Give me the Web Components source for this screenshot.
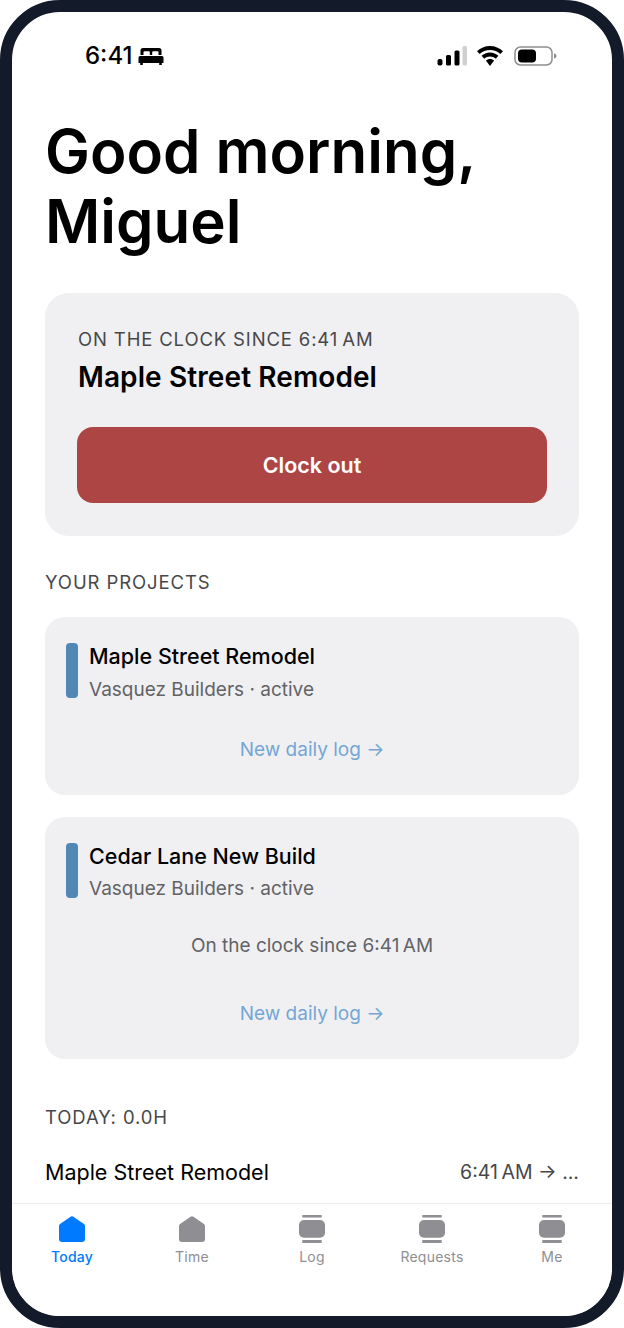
<!doctype html>
<html>
<head>
<meta charset="utf-8">
<style>
  html, body { margin: 0; padding: 0; background: #fff; }
  body { font-family: Inter, "Liberation Sans", sans-serif; }
</style>
</head>
<body>
<phone-frame>
  <status-bar slot="status"></status-bar>
  <h-greeting>Good morning,<br>Miguel</h-greeting>
  <clock-card label="On the clock since 6:41&#8239;AM" project="Maple Street Remodel" action="Clock out"></clock-card>
  <section-label style="margin-top:34px">Your projects</section-label>
  <project-card style="margin-top:23px" name="Maple Street Remodel" meta="Vasquez Builders · active"></project-card>
  <project-card style="margin-top:22px" name="Cedar Lane New Build" meta="Vasquez Builders · active" note="On the clock since 6:41&#8239;AM"></project-card>
  <section-label style="margin-top:46px">Today: 0.0h</section-label>
  <entry-row name="Maple Street Remodel" time="6:41&#8239;AM → ..."></entry-row>
  <tab-bar slot="tabs">
    <tab-item label="Today" icon="home" active></tab-item>
    <tab-item label="Time" icon="home"></tab-item>
    <tab-item label="Log" icon="stack"></tab-item>
    <tab-item label="Requests" icon="stack"></tab-item>
    <tab-item label="Me" icon="stack"></tab-item>
  </tab-bar>
</phone-frame>

<script>
// Small helper so each component only declares its css and markup
class ShadowEl extends HTMLElement {
  constructor() {
    super();
    this.attachShadow({ mode: 'open' });
  }
  connectedCallback() {
    this.shadowRoot.innerHTML = `<style>${this.css()}</style>${this.html()}`;
  }
  attr(name) {
    return this.getAttribute(name) || '';
  }
}

class PhoneFrame extends ShadowEl {
  css() {
    return `
      :host { display: block; width: 624px; height: 1328px; box-sizing: border-box;
        border: 12px solid #131a2a; border-radius: 60px; background: #fff; overflow: hidden; }
      .screen { height: 100%; display: flex; flex-direction: column; }
      .scroll { flex: 1; min-height: 0; overflow: hidden; padding: 0 33px; }
    `;
  }
  html() {
    return `<div class="screen">
      <slot name="status"></slot>
      <div class="scroll"><slot></slot></div>
      <slot name="tabs"></slot>
    </div>`;
  }
}

class StatusBar extends ShadowEl {
  css() {
    return `
      :host { display: flex; align-items: center; justify-content: space-between; height: 88px;
        box-sizing: border-box; padding: 0 55px 0 73px; flex: none; }
      .left, .right { display: flex; align-items: center; }
      .time { font-size: 24px; font-weight: 500; color: #000; line-height: 28px; }
      svg { display: block; }
    `;
  }
  html() {
    return `<div class="left">
        <span class="time">6:41</span>
        <svg style="margin-left:6px" width="26" height="19" viewBox="0 0 26 19">
          <path fill-rule="evenodd" d="M5 1h16a2.500 2.500 0 0 1 2.500 2.500V8h-21V3.500A2.500 2.500 0 0 1 5 1zM6.500 4.200a1 1 0 0 0-1 1V8h6.300V5.200a1 1 0 0 0-1-1zM15.200 4.200a1 1 0 0 0-1 1V8h6.300V5.200a1 1 0 0 0-1-1z" fill="#000"/>
          <path d="M2 9h22a1.500 1.500 0 0 1 1.500 1.500V16h-1.700v2h-2.600v-2H4.800v2H2.200v-2H.5v-5.500A1.500 1.500 0 0 1 2 9z" fill="#000"/>
        </svg>
      </div>
      <div class="right">
        <svg width="30" height="20" viewBox="0 0 30 20">
          <rect x="0.500" y="13" width="5" height="6.500" rx="2" fill="#000"/>
          <rect x="9" y="9" width="5" height="10.500" rx="1.500" fill="#000"/>
          <rect x="17.500" y="4.500" width="5" height="15" rx="1.500" fill="#000"/>
          <rect x="25.500" y="0" width="4.500" height="19.500" rx="1.500" fill="#cfcfcf"/>
        </svg>
        <svg style="margin-left:10px" width="26" height="20" viewBox="0 0 26 20">
          <path d="M13 0C8 0 3.500 2 0 5.200l2.700 2.900C5.500 5.500 9 4 13 4s7.500 1.500 10.300 4.100L26 5.200C22.500 2 18 0 13 0z" fill="#000"/>
          <path d="M13 6.500c-3.300 0-6.200 1.300-8.400 3.300l2.700 2.900C8.800 11.300 10.800 10.500 13 10.500s4.200.8 5.700 2.200l2.700-2.900C19.200 7.800 16.300 6.500 13 6.500z" fill="#000"/>
          <path d="M13 13c-1.600 0-3 .6-4.100 1.600L13 20l4.100-5.400C16 13.600 14.600 13 13 13z" fill="#000"/>
        </svg>
        <svg style="margin-left:11px" width="43" height="20" viewBox="0 0 43 20">
          <rect x="1" y="1" width="37" height="18" rx="5.500" fill="none" stroke="#8e8e8e" stroke-width="1.500"/>
          <rect x="4" y="3.500" width="18" height="13" rx="4" fill="#000"/>
          <path d="M40 7.500c1.500.3 2.500 1.200 2.500 2.500s-1 2.200-2.500 2.500z" fill="#8e8e8e"/>
        </svg>
      </div>`;
  }
}

class HGreeting extends ShadowEl {
  css() {
    return `
      :host { display: block; font-size: 60px; line-height: 70px; font-weight: 600; color: #000;
        margin-top: 16px; }
    `;
  }
  html() {
    return `<slot></slot>`;
  }
}

class ClockCard extends ShadowEl {
  css() {
    return `
      :host { display: block; background: #f0f0f3; border-radius: 24px; padding: 32px 33px; margin-top: 37px;
        box-sizing: border-box; height: 243px; }
      .label { font-size: 18.500px; line-height: 28px; letter-spacing: .85px; color: #48484a; text-transform: uppercase; }
      .name { font-size: 28px; line-height: 34px; font-weight: 600; letter-spacing: .1px; color: #000; margin-top: 7px; }
      button { display: block; width: calc(100% + 2px); margin: 33px -1px 0; height: 76px; border: 0; border-radius: 16px;
        background: #ae4545; color: #fff; font: 600 21.500px Inter, sans-serif; }
    `;
  }
  html() {
    return `<div class="label">${this.attr('label')}</div>
      <div class="name">${this.attr('project')}</div>
      <button>${this.attr('action')}</button>`;
  }
}

class SectionLabel extends ShadowEl {
  css() {
    return `
      :host { display: block; font-size: 18.500px; line-height: 24px; letter-spacing: .9px; color: #48484a;
        text-transform: uppercase; }
    `;
  }
  html() {
    return `<slot></slot>`;
  }
}

class ProjectCard extends ShadowEl {
  css() {
    return `
      :host { display: block; background: #f0f0f3; border-radius: 20px; padding: 26px 21px 33px; }
      .head { display: flex; gap: 11px; }
      .bar { width: 12px; height: 55px; border-radius: 4px; background: #5087b5; flex: none; }
      .name { font-size: 21.500px; line-height: 28px; font-weight: 500; color: #000; margin-top: -1px; }
      .meta { font-size: 19px; line-height: 24px; color: #636366; margin-top: 7.500px; }
      :host([note]) .meta { margin-top: 7px; }
      .note { font-size: 19px; line-height: 24px; color: #636366; text-align: center; margin-top: 32.500px; }
      .link { font-size: 19px; line-height: 24px; color: #74a6d4; text-align: center; margin-top: 36.500px; }
      .note + .link { margin-top: 44px; }
    `;
  }
  html() {
    const note = this.attr('note');
    return `<div class="head"><div class="bar"></div><div>
        <div class="name">${this.attr('name')}</div>
        <div class="meta">${this.attr('meta')}</div>
      </div></div>
      ${note ? `<div class="note">${note}</div>` : ''}
      <div class="link">New daily log →</div>`;
  }
}

class EntryRow extends ShadowEl {
  css() {
    return `
      :host { display: flex; justify-content: space-between; align-items: center; margin-top: 29px; line-height: 28px; }
      .name { font-size: 21.500px; color: #000; }
      .time { font-size: 19.500px; color: #48484a; }
    `;
  }
  html() {
    return `<span class="name">${this.attr('name')}</span><span class="time">${this.attr('time')}</span>`;
  }
}

class TabBar extends ShadowEl {
  css() {
    return `
      :host { display: grid; grid-template-columns: repeat(5, 1fr); flex: none; height: 113px; box-sizing: border-box;
        border-top: 1px solid #ececee; background: #fff; }
    `;
  }
  html() {
    return `<slot></slot>`;
  }
}

const TAB_ICONS = {
  home: `<path d="M14.800 1.900 24.600 8.700c.9.600 1.400 1.500 1.400 2.500V24a3 3 0 0 1-3 3H3a3 3 0 0 1-3-3V11.200c0-1 .5-1.900 1.400-2.500L11.200 1.900c1.100-.8 2.500-.8 3.600 0z"/>`,
  stack: `<rect x="3.300" y="0" width="19.400" height="2.500" rx=".5"/><rect x="0" y="5" width="26" height="17.700" rx="5"/><rect x="3.300" y="25" width="19.400" height="3" rx=".5"/>`
};

class TabItem extends ShadowEl {
  css() {
    const active = this.hasAttribute('active');
    return `
      :host { display: flex; flex-direction: column; align-items: center; padding-top: 11px; color: ${active ? '#007aff' : '#8e8e93'}; }
      svg { display: block; fill: currentColor; }
      span { font-size: 14px; line-height: 18px; letter-spacing: .25px; margin-top: 5px; font-weight: ${active ? 500 : 400}; }
    `;
  }
  html() {
    return `<svg width="26" height="28" viewBox="0 0 26 28">${TAB_ICONS[this.attr('icon')]}</svg>
      <span>${this.attr('label')}</span>`;
  }
}

customElements.define('phone-frame', PhoneFrame);
customElements.define('status-bar', StatusBar);
customElements.define('h-greeting', HGreeting);
customElements.define('clock-card', ClockCard);
customElements.define('section-label', SectionLabel);
customElements.define('project-card', ProjectCard);
customElements.define('entry-row', EntryRow);
customElements.define('tab-bar', TabBar);
customElements.define('tab-item', TabItem);
</script>
</body>
</html>
